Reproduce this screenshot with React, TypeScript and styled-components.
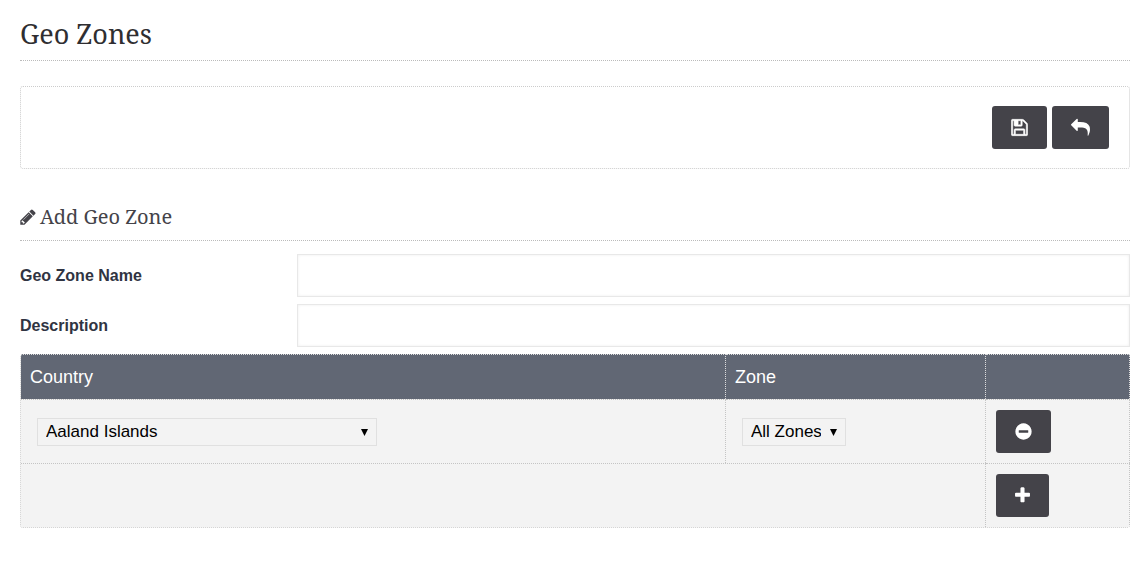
import React from "react";
import styled, { createGlobalStyle } from "styled-components";

const GlobalStyle = createGlobalStyle`
  *, *::before, *::after { box-sizing: border-box; }
  body {
    margin: 0;
    background: #fff;
    color: #303442;
    font-family: "Liberation Sans", Arial, sans-serif;
    font-size: 16px;
  }
`;

const serif = `"Noto Serif", "Droid Serif", "DejaVu Serif Condensed", "DejaVu Serif", serif`;

const Page = styled.main`
  padding: 12px 16px 36px 20px;
`;

const PageTitle = styled.h1`
  margin: 0 0 25px;
  padding-bottom: 4px;
  border-bottom: 1px dotted #bbb;
  color: #2f2e31;
  font: 400 27px/44px ${serif};
`;

const Toolbar = styled.div`
  display: flex;
  justify-content: flex-end;
  gap: 5px;
  padding: 19px 20px;
  border: 1px dotted #ccc;
  border-radius: 3px;
`;

const IconButton = styled.button`
  display: inline-flex;
  align-items: center;
  justify-content: center;
  height: 43px;
  padding: 0 19px;
  border: 0;
  border-radius: 3px;
  background: #444349;
  color: #fff;
  cursor: pointer;
  vertical-align: top;
`;

const SectionTitle = styled.h2`
  display: flex;
  align-items: center;
  gap: 4px;
  margin: 32px 0 13px;
  padding-bottom: 7px;
  border-bottom: 1px dotted #bbb;
  color: #444349;
  font: 400 20px/32px ${serif};
`;

const Field = styled.div`
  display: grid;
  grid-template-columns: 277px 1fr;
  align-items: center;
  margin-bottom: 7px;
`;

const Label = styled.label`
  font-weight: 700;
`;

const TextInput = styled.input`
  width: 100%;
  height: 43px;
  padding: 0 12px;
  border: 1px solid #e8e8e8;
  box-shadow: inset 0 0 3px #eee;
  background: #fff;
  font: inherit;
`;

const ZoneTable = styled.table`
  width: 100%;
  table-layout: fixed;
  border-collapse: separate;
  border-spacing: 0;
  border: 1px dotted #ccc;
  border-width: 0 0 1px 1px;
  border-radius: 3px;
  overflow: hidden;
`;

const Column = styled.col<{ $share?: string }>`
  width: ${(p) => p.$share ?? "auto"};
`;

const HeadCell = styled.th`
  height: 45px;
  padding: 0 9px;
  border: 1px dotted #ddd;
  border-width: 1px 1px 0 0;
  background: #616774;
  color: #fff;
  font-size: 18px;
  font-weight: 400;
  text-align: left;
`;

const Cell = styled.td`
  height: 64px;
  padding: 0 10px;
  border: 1px dotted #c4c4c4;
  border-width: 1px 1px 0 0;
  background: #f3f3f3;
`;

const SelectBox = styled.span<{ $width: number }>`
  position: relative;
  display: block;
  width: ${(p) => p.$width}px;
  max-width: 100%;
  margin-left: 6px;
  svg {
    position: absolute;
    right: 9px;
    top: 11px;
    pointer-events: none;
  }
`;

const Select = styled.select`
  appearance: none;
  display: block;
  width: 100%;
  height: 28px;
  padding: 0 24px 0 8px;
  border: 1px solid #e0e0e0;
  border-radius: 0;
  background: #f3f3f3;
  color: #000;
  font: 17px/24px "Liberation Sans", Arial, sans-serif;
`;

const glyphs = {
  save: {
    box: "128 0 1536 1792",
    width: 17,
    height: 19,
    stroke: 50,
    d: "M512 1536h768v-384h-768v384zm896 0h128v-896q0-14-10-38.5t-20-34.5l-281-281q-10-10-34-20t-39-10v416q0 40-28 68t-68 28h-576q-40 0-68-28t-28-68v-416h-128v1280h128v-416q0-40 28-68t68-28h832q40 0 68 28t28 68v416zm-384-928v-320q0-13-9.5-22.5t-22.5-9.5h-192q-13 0-22.5 9.5t-9.5 22.5v320q0 13 9.5 22.5t22.5 9.5h192q13 0 22.5-9.5t9.5-22.5zm640 32v928q0 40-28 68t-68 28h-1344q-40 0-68-28t-28-68v-1344q0-40 28-68t68-28h928q40 0 88 20t76 48l280 280q28 28 48 76t20 88z",
  },
  reply: {
    box: "0 0 1792 1792",
    width: 19,
    height: 19,
    stroke: 0,
    d: "M1792 1120q0 166-127 451-3 7-10.5 24t-13.5 30-13 22q-12 17-28 17-15 0-23.5-10t-8.5-25q0-9 2.5-26.5t2.5-23.5q5-68 5-123 0-101-17.5-181t-48.5-138.5-80-101-105.5-69.5-133-42.5-154-21.5-175.5-6h-224v256q0 26-19 45t-45 19-45-19l-512-512q-19-19-19-45t19-45l512-512q19-19 45-19t45 19 19 45v256h224q713 0 875 403 53 134 53 333z",
  },
  pencil: {
    box: "128 0 1536 1792",
    width: 16,
    height: 18,
    stroke: 0,
    d: "M491 1536l91-91-235-235-91 91v107h128v128h107zm523-928q0-22-22-22-10 0-17 7l-542 542q-7 7-7 17 0 22 22 22 10 0 17-7l542-542q7-7 7-17zm-54-192l416 416-832 832h-416v-416zm683 96q0 53-37 90l-166 166-416-416 166-165q36-38 90-38 53 0 91 38l235 234q37 39 37 91z",
  },
  minus: {
    box: "128 0 1536 1792",
    width: 17,
    height: 19,
    stroke: 0,
    d: "M1344 960v-128q0-26-19-45t-45-19h-768q-26 0-45 19t-19 45v128q0 26 19 45t45 19h768q26 0 45-19t19-45zm320-64q0 209-103 385.5t-279.5 279.5-385.5 103-385.5-103-279.5-279.5-103-385.5 103-385.5 279.5-279.5 385.5-103 385.5 103 279.5 279.5 103 385.5z",
  },
  plus: {
    box: "192 0 1408 1792",
    width: 15,
    height: 19,
    stroke: 0,
    d: "M1600 736v192q0 40-28 68t-68 28h-416v416q0 40-28 68t-68 28h-192q-40 0-68-28t-28-68v-416h-416q-40 0-68-28t-28-68v-192q0-40 28-68t68-28h416v-416q0-40 28-68t68-28h192q40 0 68 28t28 68v416h416q40 0 68 28t28 68z",
  },
};

function Icon({ name }: { name: keyof typeof glyphs }) {
  const g = glyphs[name];
  return (
    <svg width={g.width} height={g.height} viewBox={g.box} fill="currentColor" aria-hidden="true">
      <path d={g.d} stroke="currentColor" strokeWidth={g.stroke} />
    </svg>
  );
}

function DropDown({ label, value, width }: { label: string; value: string; width: number }) {
  return (
    <SelectBox $width={width}>
      <Select aria-label={label} defaultValue={value}>
        <option>{value}</option>
      </Select>
      <svg width="7" height="7" viewBox="0 0 7 7" aria-hidden="true">
        <path d="M0 0H7L3.5 7Z" fill="#000" />
      </svg>
    </SelectBox>
  );
}

export default function App() {
  return (
    <>
      <GlobalStyle />
      <Page>
        <PageTitle>Geo Zones</PageTitle>
        <Toolbar>
          <IconButton type="button" aria-label="Save"><Icon name="save" /></IconButton>
          <IconButton type="button" aria-label="Back"><Icon name="reply" /></IconButton>
        </Toolbar>
        <SectionTitle><Icon name="pencil" />Add Geo Zone</SectionTitle>
        <form onSubmit={(e) => e.preventDefault()}>
          <Field>
            <Label htmlFor="zone-name">Geo Zone Name</Label>
            <TextInput id="zone-name" type="text" />
          </Field>
          <Field>
            <Label htmlFor="zone-description">Description</Label>
            <TextInput id="zone-description" type="text" />
          </Field>
          <ZoneTable>
            <colgroup>
              <Column />
              <Column $share="260px" />
              <Column $share="144px" />
            </colgroup>
            <thead>
              <tr>
                <HeadCell scope="col">Country</HeadCell>
                <HeadCell scope="col">Zone</HeadCell>
                <HeadCell as="td" />
              </tr>
            </thead>
            <tbody>
              <tr>
                <Cell><DropDown label="Country" value="Aaland Islands" width={340} /></Cell>
                <Cell><DropDown label="Zone" value="All Zones" width={104} /></Cell>
                <Cell><IconButton type="button" aria-label="Remove"><Icon name="minus" /></IconButton></Cell>
              </tr>
              <tr>
                <Cell colSpan={2} />
                <Cell><IconButton type="button" aria-label="Add"><Icon name="plus" /></IconButton></Cell>
              </tr>
            </tbody>
          </ZoneTable>
        </form>
      </Page>
    </>
  );
}
